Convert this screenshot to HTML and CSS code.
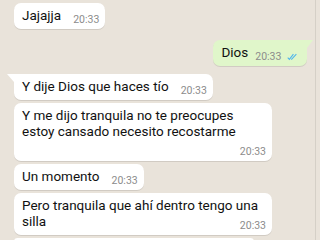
FILE: index.html
```html
<!DOCTYPE html>
<html lang="es">
<head>
    <meta charset="UTF-8">
    <title>Chat</title>
    <link rel="stylesheet" href="styles.css">
</head>
<body>
    <div class="chat">
        <div class="msg in first-row">Jajajja<span class="time">20:33</span></div>

        <div class="msg out tail">Dios<span class="time">20:33
            <svg class="ticks" width="11" height="8" viewBox="0 0 12 8">
                <path d="M0.8 4.6l1.8 1.9 4.4-5.6M4.6 6.2l0.4 0.3 5.2-5.6" fill="none" stroke="#4fb6ec" stroke-width="1.2"/>
            </svg></span></div>

        <div class="msg in tail group">Y dije Dios que haces tío<span class="time">20:33</span></div>
        <div class="msg in">Y me dijo tranquila no te preocupes estoy cansado necesito recostarme<span class="time">20:33</span></div>
        <div class="msg in">Un momento<span class="time">20:33</span></div>
        <div class="msg in">Pero tranquila que ahí dentro tengo una silla<span class="time">20:33</span></div>
        <div class="msg in cut"></div>
    </div>
</body>
</html>
```

FILE: styles.css
```css
*{
    margin: 0;
    padding: 0;
    box-sizing: border-box;
}
:root{
    --bg:#e9e3da;
    --text:#111;
    --time:#8c8c8c;
    --out:#e0f6ca;
}
body {
    background-color: var(--bg);
    font-family: Roboto, "Noto Sans", sans-serif;
    color: var(--text);
}
.chat{
    width: 316px;
    height: 240px;
    overflow: hidden;
    display: flex;
    flex-direction: column;
    align-items: flex-start;
    padding: 3px 0 0 14px;
    border-right: 1px solid #d5d0c7;
}
.msg{
    position: relative;
    display: flow-root;
    max-width: 258px;
    padding: 4px 6px 3px 8px;
    margin-top: 3px;
    font-size: 13.5px;
    line-height: 16px;
    background-color: #fff;
    border-radius: 7px;
    box-shadow: 0 1px 0.5px rgba(0,0,0,0.1);
}
.msg.first-row{
    margin-top: 0;
}
.time{
    float: right;
    margin: 7px 0 0 12px;
    font-size: 10.5px;
    line-height: 12px;
    color: var(--time);
}
.out{
    align-self: flex-end;
    margin: 11px 8px 0 0;
    padding-right: 9px;
    background-color: var(--out);
}
.out .time{
    margin-left: 7px;
}
.ticks{
    margin-left: 3px;
    vertical-align: -1px;
}
.group{
    margin-top: 8px;
}
.tail.in{
    border-top-left-radius: 0;
}
.tail.out{
    border-top-right-radius: 0;
}
.tail::before{
    content: "";
    position: absolute;
    top: 0;
    width: 0;
    height: 0;
    border-top: 8px solid #fff;
}
.tail.in::before{
    left: -7px;
    border-left: 7px solid transparent;
}
.tail.out::before{
    right: -6px;
    border-top-color: var(--out);
    border-right: 6px solid transparent;
}
.cut{
    width: 240px;
    height: 30px;
}
```
